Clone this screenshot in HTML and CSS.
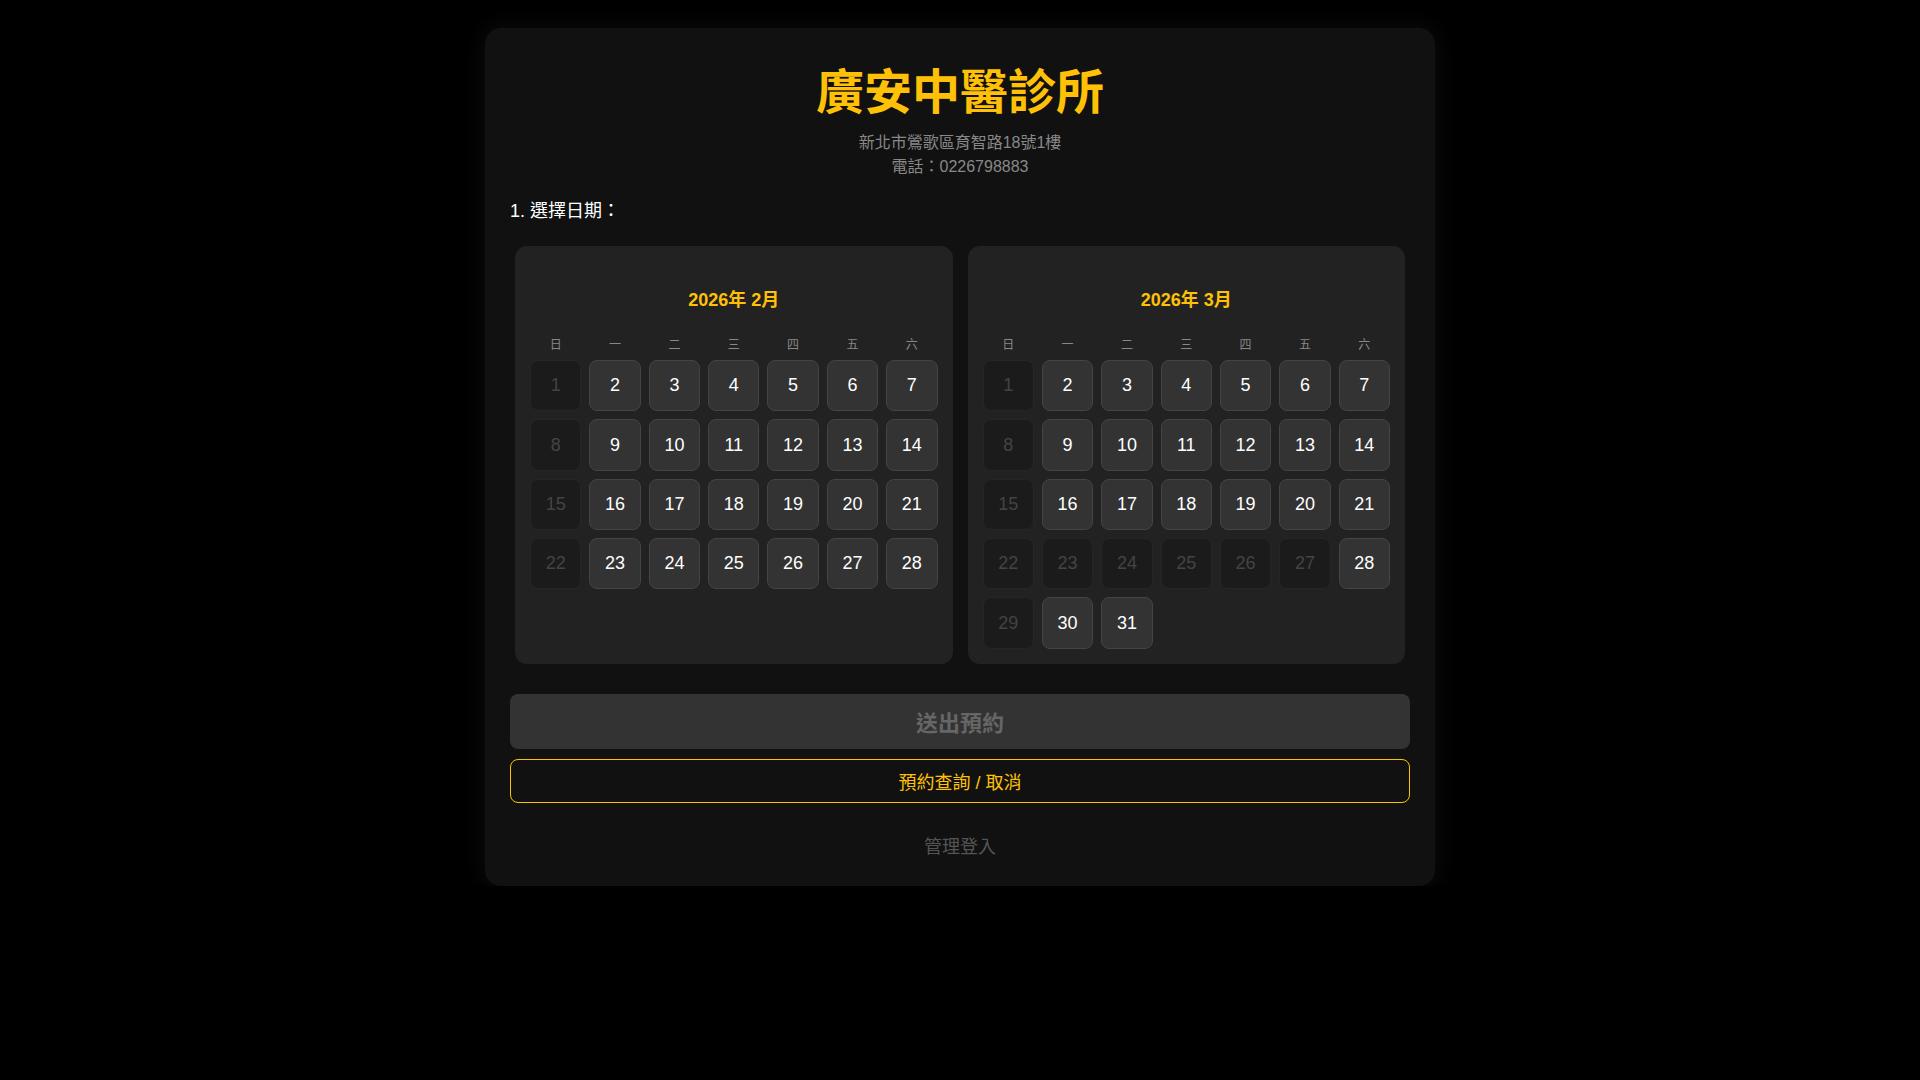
FILE: index.html
```html
<!DOCTYPE html>
<html lang="zh-Hant">
<head>
<meta charset="utf-8">
<title>廣安中醫診所</title>
<link rel="stylesheet" href="styles.css">
</head>
<body>
<div class="card">
  <h1 class="title">廣安中醫診所</h1>
  <div class="info">
    <div>新北市鶯歌區育智路18號1樓</div>
    <div>電話：0226798883</div>
  </div>
  <div class="label">1. 選擇日期：</div>
  <div class="calendars">
    <div class="cal">
      <div class="month">2026年 2月</div>
      <div class="grid">
        <div class="wd">日</div><div class="wd">一</div><div class="wd">二</div><div class="wd">三</div><div class="wd">四</div><div class="wd">五</div><div class="wd">六</div>
        <div class="day off">1</div><div class="day">2</div><div class="day">3</div><div class="day">4</div><div class="day">5</div><div class="day">6</div><div class="day">7</div>
        <div class="day off">8</div><div class="day">9</div><div class="day">10</div><div class="day">11</div><div class="day">12</div><div class="day">13</div><div class="day">14</div>
        <div class="day off">15</div><div class="day">16</div><div class="day">17</div><div class="day">18</div><div class="day">19</div><div class="day">20</div><div class="day">21</div>
        <div class="day off">22</div><div class="day">23</div><div class="day">24</div><div class="day">25</div><div class="day">26</div><div class="day">27</div><div class="day">28</div>
      </div>
    </div>
    <div class="cal">
      <div class="month">2026年 3月</div>
      <div class="grid">
        <div class="wd">日</div><div class="wd">一</div><div class="wd">二</div><div class="wd">三</div><div class="wd">四</div><div class="wd">五</div><div class="wd">六</div>
        <div class="day off">1</div><div class="day">2</div><div class="day">3</div><div class="day">4</div><div class="day">5</div><div class="day">6</div><div class="day">7</div>
        <div class="day off">8</div><div class="day">9</div><div class="day">10</div><div class="day">11</div><div class="day">12</div><div class="day">13</div><div class="day">14</div>
        <div class="day off">15</div><div class="day">16</div><div class="day">17</div><div class="day">18</div><div class="day">19</div><div class="day">20</div><div class="day">21</div>
        <div class="day off">22</div><div class="day off">23</div><div class="day off">24</div><div class="day off">25</div><div class="day off">26</div><div class="day off">27</div><div class="day">28</div>
        <div class="day off">29</div><div class="day">30</div><div class="day">31</div>
      </div>
    </div>
  </div>
  <button class="submit" type="button">送出預約</button>
  <button class="query" type="button">預約查詢 / 取消</button>
  <div class="admin">管理登入</div>
</div>
</body>
</html>
```

FILE: styles.css
```css
* { box-sizing: border-box; }

html, body {
  margin: 0;
  background: #000;
}

body {
  padding-top: 28px;
  font-family: "Liberation Sans", "Noto Sans CJK TC", sans-serif;
  color: #fff;
}

.card {
  width: 950px;
  margin: 0 auto;
  padding: 25px;
  background: #111;
  border-radius: 16px;
  box-shadow: 0 0 24px rgba(255, 255, 255, 0.06);
}

.title {
  margin: 11px 0 0;
  font-size: 48px;
  line-height: 58px;
  font-weight: bold;
  color: #ffc107;
  text-align: center;
}

.info {
  margin-top: 9px;
  font-size: 16px;
  line-height: 24px;
  color: #888;
  text-align: center;
}

.label {
  margin-top: 19px;
  font-size: 18px;
  line-height: 27px;
  color: #fff;
}

.calendars {
  display: flex;
  gap: 15px;
  padding: 0 5px;
  margin-top: 21px;
}

.cal {
  flex: 1;
  background: #222;
  border-radius: 12px;
  padding: 15px;
}

.month {
  margin-top: 28px;
  font-size: 18px;
  line-height: 22px;
  font-weight: bold;
  color: #ffc107;
  text-align: center;
}

.grid {
  display: grid;
  grid-template-columns: repeat(7, 1fr);
  gap: 8px;
  margin-top: 25px;
}

.wd {
  padding-top: 2px;
  font-size: 12px;
  line-height: 14px;
  color: #888;
  text-align: center;
}

.day {
  aspect-ratio: 1 / 1;
  display: flex;
  align-items: center;
  justify-content: center;
  background: #333;
  border: 1px solid #444;
  border-radius: 8px;
  font-size: 18px;
  color: #fff;
}

.day.off {
  background: #1b1b1b;
  border-color: #262626;
  color: #444;
}

.submit {
  display: block;
  width: 100%;
  height: 55px;
  margin-top: 30px;
  background: #333;
  border: none;
  border-radius: 8px;
  font-family: inherit;
  font-size: 22px;
  font-weight: bold;
  color: #666;
}

.query {
  display: block;
  width: 100%;
  height: 44px;
  margin-top: 10px;
  background: transparent;
  border: 1px solid #ffc107;
  border-radius: 8px;
  font-family: inherit;
  font-size: 18px;
  color: #ffc107;
}

.admin {
  margin-top: 31px;
  font-size: 18px;
  line-height: 27px;
  color: #555;
  text-align: center;
}
```
